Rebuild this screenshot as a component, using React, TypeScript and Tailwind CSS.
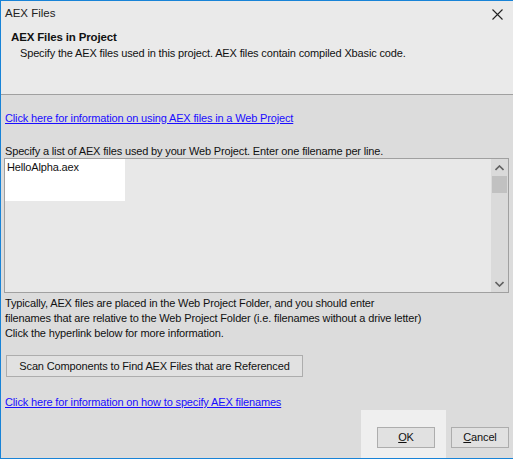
export default function App() {
    const font = { fontFamily: '"Liberation Sans", Arial, sans-serif' }

    return (
        <div className="w-[513px] h-[459px] bg-[#dcdcdc] border-l border-t border-b border-[#1883d7] flex flex-col text-[11px] tracking-[-0.15px] text-[#111] overflow-hidden" style={font}>
            {/* title + header */}
            <div className="h-[94px] bg-[#eaeaea] border-b border-[#a0a0a0] flex flex-col shrink-0">
                <div className="h-[25px] flex items-center justify-between pl-[4px] pr-[10px]">
                    <span className="text-[11.5px] tracking-normal text-[#222]">AEX Files</span>
                    <svg width="11" height="11" viewBox="0 0 11 11" className="mt-[1px]">
                        <path d="M0.5 0.5 L10.5 10.5 M10.5 0.5 L0.5 10.5" stroke="#222" strokeWidth="1.1" fill="none" />
                    </svg>
                </div>
                <div className="pl-[10px] mt-[4px] font-bold text-[11.5px] leading-[15px]">AEX Files in Project</div>
                <div className="pl-[19px] mt-[1px] leading-[15px]">Specify the AEX files used in this project. AEX files contain compiled Xbasic code.</div>
            </div>

            {/* body */}
            <div className="flex flex-col pl-[4px] flex-1">
                <a className="mt-[16px] leading-[14px] text-[#1a0dff] underline self-start cursor-pointer">Click here for information on using AEX files in a Web Project</a>
                <div className="mt-[19px] leading-[14px]">Specify a list of AEX files used by your Web Project. Enter one filename per line.</div>

                <div className="ml-[-1px] w-[505px] h-[135px] border border-[#a0a0a0] bg-[#e8e8e8] flex">
                    <div className="flex-1">
                        <div className="w-[120px] h-[42px] bg-white pl-[2px] pt-[1px] leading-[14px] text-[#111]">HelloAlpha.aex</div>
                    </div>
                    <div className="w-[17px] bg-[#dadada] flex flex-col items-center">
                        <div className="h-[17px] flex items-center justify-center">
                            <svg width="9" height="6" viewBox="0 0 9 6">
                                <path d="M0.5 5 L4.5 1 L8.5 5" stroke="#606060" strokeWidth="1.6" fill="none" />
                            </svg>
                        </div>
                        <div className="w-[15px] h-[17px] bg-[#c1c1c1]" />
                        <div className="flex-1" />
                        <div className="h-[17px] flex items-center justify-center">
                            <svg width="9" height="6" viewBox="0 0 9 6">
                                <path d="M0.5 1 L4.5 5 L8.5 1" stroke="#606060" strokeWidth="1.6" fill="none" />
                            </svg>
                        </div>
                    </div>
                </div>

                <div className="mt-[3px] leading-[15px]">
                    <div>Typically, AEX files are placed in the Web Project Folder, and you should enter</div>
                    <div>filenames that are relative to the Web Project Folder (i.e. filenames without a drive letter)</div>
                    <div>Click the hyperlink below for more information.</div>
                </div>

                <button className="mt-[14px] ml-[1px] w-[297px] h-[22px] bg-[#e1e1e1] border border-[#adadad] text-[11px] text-[#111] flex items-center justify-center">
                    Scan Components to Find AEX Files that are Referenced
                </button>

                <a className="mt-[18px] leading-[14px] text-[#1a0dff] underline self-start cursor-pointer">Click here for information on how to specify AEX filenames</a>

                <div className="flex justify-end pr-[4px] mt-[1px] flex-1">
                    <div className="w-[85px] bg-[#efefef] flex items-end pb-[10px] pl-[16px]">
                        <button className="w-[58px] h-[21px] bg-[#e1e1e1] border border-[#adadad] text-[11px] text-[#111]">
                            <span className="underline">O</span>K
                        </button>
                    </div>
                    <div className="flex items-end pb-[10px] ml-[5px]">
                        <button className="w-[58px] h-[21px] bg-[#e1e1e1] border border-[#adadad] text-[11px] text-[#111]">
                            <span className="underline">C</span>ancel
                        </button>
                    </div>
                </div>
            </div>
        </div>
    )
}
